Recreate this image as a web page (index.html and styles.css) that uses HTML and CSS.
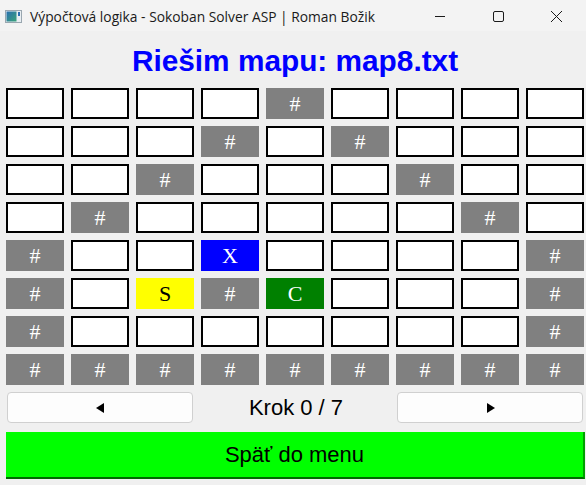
FILE: index.html
```html
<!DOCTYPE html>
<html lang="sk">
<head>
<meta charset="utf-8">
<title>Výpočtová logika - Sokoban Solver ASP | Roman Božik</title>
<link rel="stylesheet" href="styles.css">
</head>
<body>
<div class="window">
  <div class="titlebar">
    <svg class="app-icon" width="17" height="13" viewBox="0 0 17 13">
      <defs>
        <linearGradient id="g" x1="0" y1="0" x2="1" y2="1">
          <stop offset="0" stop-color="#2a6fb0"/>
          <stop offset="1" stop-color="#3aa37a"/>
        </linearGradient>
      </defs>
      <rect x="0.5" y="0.5" width="16" height="12" fill="#e8eef2" stroke="#9aa7b0"/>
      <rect x="1.5" y="1.5" width="10" height="10" fill="url(#g)"/>
      <rect x="13" y="2" width="2" height="4" fill="#2a6fb0"/>
    </svg>
    <span class="title-text">Výpočtová logika - Sokoban Solver ASP | Roman Božik</span>
    <div class="controls">
      <svg class="ctl" width="58" height="31" viewBox="0 0 58 31"><line x1="24" y1="16.5" x2="34" y2="16.5" stroke="#1a1a1a" stroke-width="1"/></svg>
      <svg class="ctl" width="58" height="31" viewBox="0 0 58 31"><rect x="24.5" y="11.5" width="10" height="10" rx="1.5" fill="none" stroke="#1a1a1a" stroke-width="1"/></svg>
      <svg class="ctl" width="58" height="31" viewBox="0 0 58 31"><path d="M24 11 L35 22 M35 11 L24 22" stroke="#1a1a1a" stroke-width="1"/></svg>
    </div>
  </div>

  <h1 class="heading">Riešim mapu: map8.txt</h1>

  <div class="board">
    <div class="cell"></div><div class="cell"></div><div class="cell"></div><div class="cell"></div><div class="cell wall">#</div><div class="cell"></div><div class="cell"></div><div class="cell"></div><div class="cell"></div>
    <div class="cell"></div><div class="cell"></div><div class="cell"></div><div class="cell wall">#</div><div class="cell"></div><div class="cell wall">#</div><div class="cell"></div><div class="cell"></div><div class="cell"></div>
    <div class="cell"></div><div class="cell"></div><div class="cell wall">#</div><div class="cell"></div><div class="cell"></div><div class="cell"></div><div class="cell wall">#</div><div class="cell"></div><div class="cell"></div>
    <div class="cell"></div><div class="cell wall">#</div><div class="cell"></div><div class="cell"></div><div class="cell"></div><div class="cell"></div><div class="cell"></div><div class="cell wall">#</div><div class="cell"></div>
    <div class="cell wall">#</div><div class="cell"></div><div class="cell"></div><div class="cell box">X</div><div class="cell"></div><div class="cell"></div><div class="cell"></div><div class="cell"></div><div class="cell wall">#</div>
    <div class="cell wall">#</div><div class="cell"></div><div class="cell player">S</div><div class="cell wall">#</div><div class="cell goal">C</div><div class="cell"></div><div class="cell"></div><div class="cell"></div><div class="cell wall">#</div>
    <div class="cell wall">#</div><div class="cell"></div><div class="cell"></div><div class="cell"></div><div class="cell"></div><div class="cell"></div><div class="cell"></div><div class="cell"></div><div class="cell wall">#</div>
    <div class="cell wall">#</div><div class="cell wall">#</div><div class="cell wall">#</div><div class="cell wall">#</div><div class="cell wall">#</div><div class="cell wall">#</div><div class="cell wall">#</div><div class="cell wall">#</div><div class="cell wall">#</div>
  </div>

  <div class="nav">
    <button class="nav-btn" type="button" aria-label="Predchádzajúci krok">
      <svg width="9" height="10" viewBox="0 0 9 10"><polygon points="8,0 8,10 0,5" fill="#000"/></svg>
    </button>
    <span class="step">Krok 0 / 7</span>
    <button class="nav-btn" type="button" aria-label="Ďalší krok">
      <svg width="9" height="10" viewBox="0 0 9 10"><polygon points="1,0 1,10 9,5" fill="#000"/></svg>
    </button>
  </div>

  <button class="back-btn" type="button">Späť do menu</button>
</div>
</body>
</html>
```

FILE: styles.css
```css
* { box-sizing: border-box; }

html, body {
  margin: 0;
  padding: 0;
  background: #f0f0f0;
}

.window {
  width: 586px;
  height: 485px;
  overflow: hidden;
  background: #f0f0f0;
  display: flex;
  flex-direction: column;
}

.titlebar {
  height: 31px;
  flex: none;
  background: #f3f3f3;
  display: flex;
  align-items: center;
  font-family: "Open Sans", "Noto Sans", sans-serif;
  font-size: 13.8px;
  color: #1a1a1a;
}

.app-icon {
  margin-left: 5px;
  margin-right: 8px;
  margin-top: 1px;
}

.title-text {
  flex: 1;
  white-space: nowrap;
  margin-top: 1px;
}

.controls {
  display: flex;
  margin-right: 1px;
}

.ctl { display: block; }

.heading {
  margin: 0;
  height: 57px;
  flex: none;
  padding-top: 15px;
  padding-left: 4px;
  text-align: center;
  font-family: "Liberation Sans", Arial, sans-serif;
  font-weight: bold;
  font-size: 29.8px;
  line-height: 30px;
  color: #0000ff;
}

.board {
  display: grid;
  grid-template-columns: repeat(9, 58px);
  grid-auto-rows: 31px;
  gap: 7px;
  margin-left: 6px;
}

.cell {
  background: #ffffff;
  border: 2px solid #000000;
  display: flex;
  align-items: center;
  justify-content: center;
  font-family: "Liberation Serif", "Times New Roman", serif;
  font-size: 22px;
  color: #ffffff;
}

.cell.wall { background: #808080; border-color: #808080; }
.cell.box { background: #0000ff; border-color: #0000ff; }
.cell.player { background: #ffff00; border-color: #ffff00; color: #000000; }
.cell.goal { background: #008000; border-color: #008000; }

.nav {
  display: flex;
  align-items: center;
  height: 31px;
  margin-top: 7px;
  padding-left: 7px;
  padding-right: 3px;
}

.nav-btn {
  width: 186px;
  height: 31px;
  background: #fdfdfd;
  border: 1px solid #d0d0d0;
  border-radius: 4px;
  padding: 0;
  display: flex;
  align-items: center;
  justify-content: center;
}

.step {
  flex: 1;
  text-align: center;
  font-family: "Liberation Sans", Arial, sans-serif;
  font-size: 22px;
  color: #000000;
  padding-left: 2px;
}

.back-btn {
  margin-top: 9px;
  margin-left: 6px;
  width: 579px;
  height: 47px;
  background: #00ff00;
  border: none;
  border-right: 2px solid #00a000;
  border-bottom: 2px solid #006a00;
  padding: 0;
  font-family: "Liberation Sans", Arial, sans-serif;
  font-size: 22px;
  color: #000000;
}
```
